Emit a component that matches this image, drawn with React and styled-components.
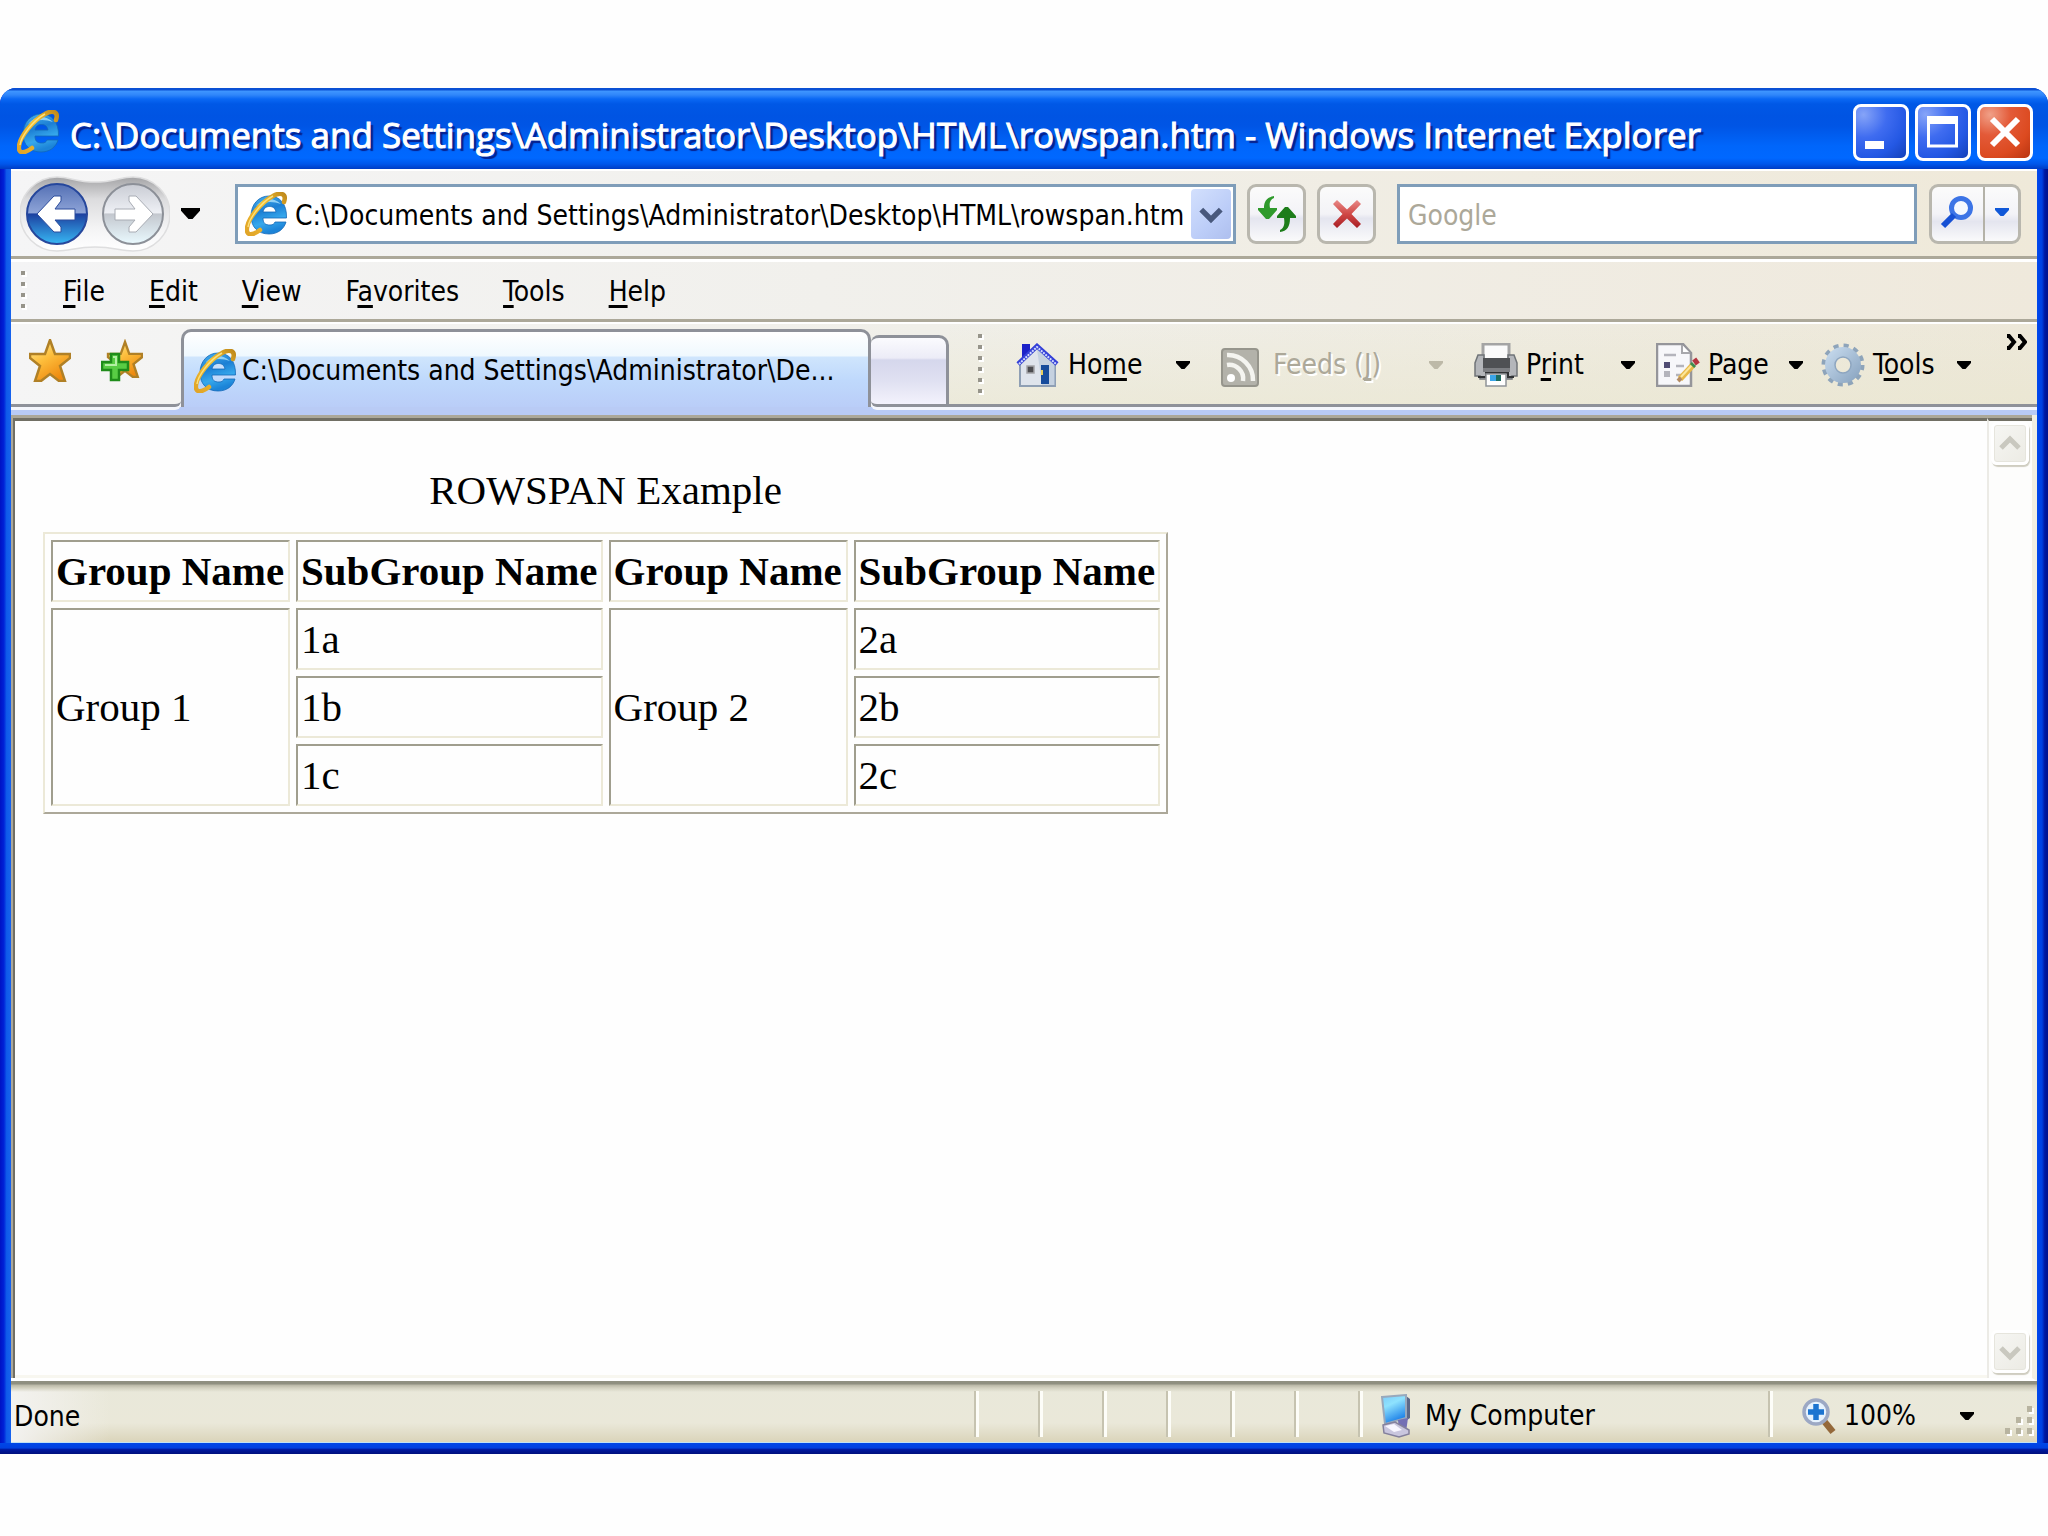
import React from "react";
import styled, { createGlobalStyle, css } from "styled-components";

const UI_FONT = `"DejaVu Sans Condensed", "DejaVu Sans", Tahoma, sans-serif`;
const PATH = "C:\\Documents and Settings\\Administrator\\Desktop\\HTML\\rowspan.htm";

const GlobalStyle = createGlobalStyle`
  *, *::before, *::after { box-sizing: border-box; }
  body { margin: 0; background: #fefefe; }
  button, input { font: inherit; color: inherit; margin: 0; }
  button { border: 0; padding: 0; background: none; cursor: default; }
  svg { display: block; flex: none; }
`;

/* ---------- window frame ---------- */

const Desktop = styled.div`
  min-height: 100vh;
  padding: 88px 0 82px;
  display: flex;
  flex-direction: column;
  font: 28px/36px ${UI_FONT};
  color: #000;
`;

const Window = styled.main`
  flex: 1;
  display: flex;
  flex-direction: column;
  padding: 0 11px 11px;
  border-radius: 16px 16px 0 0;
  background:
    linear-gradient(#0047e8, #0040e0 45%, #0019a0 60%, #00107c) bottom / 100% 11px no-repeat,
    linear-gradient(90deg, #0012c4, #0022d8 35%, #0f5bea 60%, #1663ee) left / 11px 100% no-repeat,
    linear-gradient(90deg, #0048ee, #003fe0 45%, #0018a4 70%, #00108c) right / 11px 100% no-repeat,
    #0048e0;
  overflow: hidden;
`;

const TitleBar = styled.header`
  display: flex;
  align-items: center;
  height: 81px;
  margin: 0 -11px;
  padding: 7px 15px 0 17px;
  background: linear-gradient(
    #0a50d4 0, #0a50d4 2px, #3f96ff 3px, #2f86fa 7px, #0a68f4 11px, #0058e6 16px,
    #0054e3 28px, #0055e5 38px, #0066fb 58px, #0068ff 70px, #0056ea 76px, #003cc4 81px
  );
`;

const Title = styled.h1`
  flex: 1;
  min-width: 0;
  margin: 0 0 0 11px;
  padding-top: 6px;
  font: 400 35px/48px "Open Sans", "Noto Sans", sans-serif;
  color: #fff;
  -webkit-text-stroke: 1px #fff;
  text-shadow: 3px 3px 1px #06208c;
  white-space: nowrap;
  overflow: hidden;
`;

const CaptionButtons = styled.div`
  display: flex;
  gap: 6px;
`;

const CaptionButton = styled.button`
  width: 56px;
  height: 57px;
  display: grid;
  place-items: center;
  border: 3px solid #fff;
  border-radius: 8px;
  background: ${(p) =>
    p.$close
      ? "radial-gradient(circle at 20% 15%, #f0a088, #e35a38 35%, #dc4a20 70%, #b83410)"
      : "radial-gradient(circle at 15% 15%, #86a4f8, #3f6cf0 38%, #2458e4 70%, #1440b8)"};
`;

/* ---------- tool bars ---------- */

const NavBar = styled.div`
  display: flex;
  align-items: center;
  height: 90px;
  padding: 0 16px 0 9px;
  border-top: 2px solid #fff;
  border-bottom: 3px solid #aca899;
  background: linear-gradient(90deg, #f5f5f6, #f1f0ec 40%, #efe9d9);
`;

const NavPair = styled.div`
  position: relative;
  display: flex;
  gap: 14px;
  padding: 7px 6px;
  width: 150px;
`;

const NavPlate = styled.svg`
  position: absolute;
  left: 0;
  top: 0;
`;

const RoundButton = styled.button`
  position: relative;
  width: 62px;
  height: 62px;
`;

const ArrowButton = styled.button`
  display: grid;
  place-items: center;
  width: ${(p) => p.$width}px;
  height: 36px;
  color: ${(p) => (p.disabled ? "#bdb9a8" : "#000")};
`;

const field = css`
  display: flex;
  align-items: center;
  height: 60px;
  border: 3px solid #7f9db9;
  background: #fff;
`;

const AddressBox = styled.div`
  ${field}
  flex: 1;
  min-width: 0;
  margin: 0 11px 0 25px;
  padding: 0 2px 0 7px;
`;

const SearchBox = styled.div`
  ${field}
  flex: 0 1 520px;
  min-width: 0;
  margin: 0 12px 0 10px;
  padding: 0 8px;
`;

const TextInput = styled.input`
  flex: 1;
  min-width: 0;
  height: 44px;
  padding: 4px 0 0;
  border: 0;
  outline: 0;
  background: transparent;
  &::placeholder { color: #aca899; opacity: 1; }
`;

const AddressInput = styled(TextInput)`
  margin: 0 5px 0 8px;
`;

const DropButton = styled.button`
  width: 40px;
  height: 50px;
  display: grid;
  place-items: center;
  border-radius: 4px;
  background: linear-gradient(135deg, #d3e0fd, #bccdf8 60%, #aebfee);
`;

const SquareButton = styled.button`
  width: 59px;
  height: 60px;
  margin-right: 11px;
  display: grid;
  place-items: center;
  border: 3px solid #b9b7ae;
  border-radius: 9px;
  background: linear-gradient(#fbfbfb, #f3f3f7 50%, #e4e5ef 58%, #fafafb);
`;

const SearchButtons = styled.div`
  display: flex;
  width: 92px;
  height: 60px;
  border: 3px solid #b9b7ae;
  border-radius: 9px;
  background: linear-gradient(#fbfbfb, #f3f3f7 50%, #e4e5ef 64%, #fafafb);
`;

const SearchPart = styled.button`
  flex: ${(p) => (p.$narrow ? "0 0 35px" : 1)};
  display: grid;
  place-items: center;
  padding-bottom: 4px;
  color: #1058d8;
  border-left: ${(p) => (p.$narrow ? "2px solid #b4b2a8" : "0")};
`;

const MenuBar = styled.nav`
  display: flex;
  align-items: center;
  height: 63px;
  padding-left: 10px;
  border-top: 3px solid #fff;
  border-bottom: 3px solid #aca899;
  background: linear-gradient(90deg, #f4f4f5, #f1f0ec 40%, #efe9dc);
`;

const MenuButton = styled.button`
  padding: 2px 22px 0;
  height: 40px;
  &:first-of-type { margin-left: 14px; }
`;

const Key = styled.u`
  text-decoration-thickness: 3px;
  text-underline-offset: 4px;
  text-decoration-skip-ink: none;
`;

/* ---------- tabs and commands ---------- */

const TabRow = styled.div`
  display: flex;
  height: 85px;
  border-top: 2px solid #fff;
  background: linear-gradient(90deg, #f5f5f5, #f0efe9 45%, #ede8d9 100%);
`;

const strip = css`
  position: relative;
  border-bottom: 3px solid #8e9199;
  box-shadow: 0 3px 0 #f4f6fc;
`;

const Favorites = styled.div`
  ${strip}
  display: flex;
  gap: 30px;
  width: 170px;
  padding: 15px 0 0 18px;
  border-bottom-right-radius: 6px;
  align-items: flex-start;
`;

const ActiveTab = styled.button`
  display: flex;
  align-items: center;
  width: 690px;
  margin-top: 5px;
  padding: 2px 20px 0 10px;
  gap: 6px;
  border: 3px solid #8e9199;
  border-bottom: 0;
  border-radius: 10px 10px 0 0;
  background: linear-gradient(#fff, #eff8fe 24px, #cfe5fd 25px, #bfd9fc 48px, #b9cbf7 80px);
  white-space: nowrap;
`;

const NewTab = styled.button`
  ${strip}
  width: 78px;
  margin-top: 11px;
  border-top: 3px solid #8e9199;
  border-right: 3px solid #8e9199;
  border-radius: 8px 10px 0 6px;
  background: linear-gradient(#fbfbfe, #ececf7 20px, #d5d7ec 22px, #dfe0f1 42px, #f3f2fc);
`;

const Commands = styled.div`
  ${strip}
  flex: 1;
  display: flex;
  justify-content: flex-end;
  align-items: flex-start;
  padding: 10px 10px 0 0;
  background: linear-gradient(#f0efe900, #e9e6cf90);
`;

const Command = styled.div`
  display: flex;
  align-items: center;
  width: ${(p) => p.$width}px;
  height: 66px;
  padding-bottom: 4px;
`;

const CommandButton = styled.button`
  flex: 1;
  display: flex;
  align-items: center;
  gap: 8px;
  white-space: nowrap;
  color: ${(p) => (p.disabled ? "#aca899" : "#000")};
  text-shadow: ${(p) => (p.disabled ? "2px 2px 0 #fff" : "none")};
`;

const MoreButton = styled.button`
  padding: 0 0 0 17px;
`;

const Band = styled.div`
  height: 8px;
  background: #b9cbf5;
`;

/* ---------- document ---------- */

const Viewport = styled.section`
  flex: 1;
  display: flex;
  min-height: 0;
  border-right: 5px solid #f1efe2;
  background: #fefefe;
  border-bottom: 3px solid #fff;
`;

const Page = styled.div`
  flex: 1;
  padding: 45px 28px;
  border-top: 3px solid #716f64;
  border-left: 2px solid #716f64;
  box-shadow: inset 0 -3px 0 #f8f7f0;
  background: #fefefe;
`;

const Sunken = styled.div`
  flex: 1;
  display: flex;
  border-top: 3px solid #aca899;
  border-left: 2px solid #aca899;
`;

const ScrollBar = styled.div`
  display: flex;
  flex-direction: column;
  justify-content: space-between;
  width: 45px;
  padding: 1px 3px 5px 2px;
  border-top: 3px solid #716f64;
  border-left: 2px solid #ecebe6;
  background: #fdfdfc;
`;

const ScrollButton = styled.button`
  width: 38px;
  height: 43px;
  display: grid;
  place-items: center;
  border: 3px solid #fff;
  border-radius: 6px;
  background: linear-gradient(135deg, #f6f6f3, #ecebe4);
  box-shadow: 1px 2px 1px #cfcdc0, inset 0 0 0 1px #e6e5dd;
`;

const Table = styled.table`
  border: 2px solid;
  border-color: #ece9d8 #aca899 #aca899 #ece9d8;
  border-collapse: separate;
  border-spacing: 6px;
  font: 41px/48px "Liberation Serif", "Times New Roman", serif;

  caption { padding-bottom: 18px; }
  th, td {
    height: 62px;
    padding: 0 3px;
    border: 2px solid;
    border-color: #a09e8e #ece9d8 #ece9d8 #a09e8e;
    text-align: left;
    white-space: nowrap;
  }
`;

const HeadCell = styled.th`
  width: ${(p) => p.$width}px;
`;

/* ---------- status bar ---------- */

const StatusBar = styled.footer`
  display: flex;
  height: 62px;
  padding: 10px 0 5px;
  border-bottom: 1px solid #bfe0f4;
  background:
    linear-gradient(#8f8f80 0, #8f8f80 3px, #b9b7a6 4px, #d3d1c0 7px, #e8e6d700 11px),
    linear-gradient(90deg, #f3f2f0 0, #f3f2f000 100px),
    linear-gradient(#e9e8da 0, #eae8d9 42px, #d9d3b8 62px);
`;

const StatusText = styled.p`
  flex: 1;
  margin: 0;
  padding: 8px 0 0 3px;
`;

const StatusCell = styled.div`
  display: flex;
  width: ${(p) => p.$width}px;
  border-left: 2px solid #c6c3b0;
  box-shadow: inset 3px 0 0 #fdfdf8;
`;

const Zone = styled.span`
  display: flex;
  align-items: center;
  gap: 14px;
  padding: 3px 0 0 21px;
`;

const ZoomGroup = styled.div`
  display: flex;
  align-items: center;
  flex: 1;
  padding: 3px 0 0 32px;
`;

const ZoomButton = styled.button`
  display: flex;
  align-items: center;
  gap: 8px;
`;

const ZoomArrow = styled(ArrowButton)`
  margin-left: 16px;
`;

const Corner = styled.span`
  margin-left: auto;
  align-self: flex-end;
  padding-right: 3px;
`;

/* ---------- drawings ---------- */

const IeIcon = () => (
  <svg width="42" height="44" viewBox="0 0 42 44" aria-hidden="true">
    <defs>
      <linearGradient id="ieBlue" x1="0" y1="0" x2="0.300" y2="1">
        <stop offset="0" stopColor="#4ab4f0" />
        <stop offset="0.450" stopColor="#1c7fd4" />
        <stop offset="0.750" stopColor="#36a8ec" />
        <stop offset="1" stopColor="#1c84d8" />
      </linearGradient>
      <linearGradient id="ieGold" x1="1" y1="0" x2="0" y2="1">
        <stop offset="0" stopColor="#c08a1c" />
        <stop offset="0.400" stopColor="#f4c030" />
        <stop offset="1" stopColor="#e0a428" />
      </linearGradient>
    </defs>
    <path
      fillRule="evenodd"
      fill="url(#ieBlue)"
      stroke="#1468b8"
      strokeWidth="0.800"
      d="M24 4 C35 4 42 12 41.500 26 H18 C18 31 20 33 25 33 C28 33 29 32 30 30 H41 C39 37 33 42 24 42 C13 42 6 35 6 24 C6 12 14 4 24 4 Z M18 20 H31 C30 16 28 14.500 24.500 14.500 C21 14.500 19 16 18 20 Z"
    />
    <path d="M11 14 Q23 1 36 12 Q23 7 11 14 Z" fill="#a8e0fb" opacity="0.800" />
    <path
      d="M39 10 C42 1 35 0 28 4 C15 11 3 27 2 36 C1 44 7 44 15 38"
      fill="none"
      stroke="url(#ieGold)"
      strokeWidth="4.500"
      strokeLinecap="round"
    />
    <path d="M28 4 C15 11 4 27 3 35" fill="none" stroke="#fbe07c" strokeWidth="1.500" />
  </svg>
);

const Triangle = ({ size = 14 }) => (
  <svg width={size} height={Math.round(size / 1.7)} viewBox="0 0 14 8" aria-hidden="true">
    <path d="M0 0 H14 V2 L8.500 8 H5.500 L0 2 Z" fill="currentColor" />
  </svg>
);

const Chevron = ({ up, color, size = 24 }) => (
  <svg width={size} height={size} viewBox="0 0 24 24" aria-hidden="true">
    <path
      d={up ? "M3 16 L12 7 L21 16" : "M3 8 L12 17 L21 8"}
      fill="none"
      stroke={color}
      strokeWidth="5"
    />
  </svg>
);

const Grip = ({ dots }) => (
  <svg width="6" height={dots * 11 - 4} aria-hidden="true">
    {Array.from({ length: dots }, (_, i) => (
      <g key={i}>
        <rect x="1" y={i * 11 + 1} width="5" height="5" fill="#fff" />
        <rect x="0" y={i * 11} width="4" height="4" fill="#96948a" />
      </g>
    ))}
  </svg>
);

const Plate = () => (
  <NavPlate width="150" height="76" viewBox="0 0 150 76" aria-hidden="true">
    <defs>
      <linearGradient id="plate" x1="0" y1="0" x2="0" y2="1">
        <stop offset="0" stopColor="#a4a4a6" />
        <stop offset="0.300" stopColor="#dcdcde" />
        <stop offset="0.700" stopColor="#f4f4f5" />
        <stop offset="1" stopColor="#fff" />
      </linearGradient>
    </defs>
    <path
      d="M37 1 C50 1 56 6 75 6 C94 6 100 1 113 1 A37 37 0 0 1 113 75 C100 75 94 71 75 71 C56 71 50 75 37 75 A37 37 0 0 1 37 1 Z"
      fill="url(#plate)"
      stroke="#dededf"
      strokeWidth="1.500"
    />
  </NavPlate>
);

const NavDisc = ({ forward }) => {
  const id = forward ? "discF" : "discB";
  const stops = forward
    ? ["#c9ccd4", "#eef0f5", "#c3c7ce", "#eafaff"]
    : ["#5470b4", "#8ea4d8", "#1c40a0", "#38b8f4"];
  return (
    <svg width="62" height="62" viewBox="0 0 62 62" aria-hidden="true">
      <defs>
        <linearGradient id={id} x1="0" y1="0" x2="0" y2="1">
          <stop offset="0" stopColor={stops[0]} />
          <stop offset="0.480" stopColor={stops[1]} />
          <stop offset="0.500" stopColor={stops[2]} />
          <stop offset="1" stopColor={stops[3]} />
        </linearGradient>
      </defs>
      <circle cx="31" cy="31" r="30" fill={`url(#${id})`} stroke={forward ? "#8c9098" : "#26479c"} strokeWidth="2" />
      <path
        d={
          forward
            ? "M51 31 L34 49 H27 V44 L33 37 H13 V26 H33 L27 18 V13 H34 Z"
            : "M11 31 L28 13 H35 V18 L29 26 H49 V37 H29 L35 44 V49 H28 Z"
        }
        fill="#fff"
        stroke={forward ? "#a8acb4" : "#2c4c9c"}
        strokeWidth="1"
      />
    </svg>
  );
};

const Refresh = () => (
  <svg width="38" height="36" viewBox="0 0 38 36" aria-hidden="true">
    <path d="M16 0 C9 1 6 5 6 12 H0 V14 L8 23 H11 L19 14 V12 H12 C11 7 12 4 16 2 Z" fill="#2f9a2c" />
    <path d="M22 36 C29 35 32 31 32 22 H38 V20 L30 11 H27 L19 20 V22 H26 C27 28 26 32 22 34 Z" fill="#1d7d1a" />
  </svg>
);

const Stop = () => (
  <svg width="28" height="28" viewBox="0 0 28 28" aria-hidden="true">
    <defs>
      <linearGradient id="stopRed" x1="0" y1="0" x2="0" y2="1">
        <stop offset="0" stopColor="#e88a88" />
        <stop offset="0.500" stopColor="#d04846" />
        <stop offset="1" stopColor="#a81e24" />
      </linearGradient>
    </defs>
    <path d="M4 0 L14 9.500 L24 0 L28 4 L18.500 14 L28 24 L24 28 L14 18.500 L4 28 L0 24 L9.500 14 L0 4 Z" fill="url(#stopRed)" />
  </svg>
);

const SearchGlyph = () => (
  <svg width="36" height="34" viewBox="0 0 36 34" aria-hidden="true">
    <circle cx="21" cy="13" r="9.500" fill="#f4f8ff" stroke="#3c74e6" strokeWidth="5" />
    <path d="M14 20 L3 31" stroke="#1650d4" strokeWidth="6" />
  </svg>
);

const STAR = "M20 0 L25 14 H40 V18 L30 26 L35 41 H29 L20 34 L11 41 H5 L10 26 L0 18 V14 H15 Z";

const Star = () => (
  <svg width="42" height="43" viewBox="-1 -1 42 43" aria-hidden="true">
    <defs>
      <linearGradient id="gold" x1="0" y1="0" x2="0.600" y2="1">
        <stop offset="0" stopColor="#fff0a0" />
        <stop offset="0.500" stopColor="#fdbe3c" />
        <stop offset="1" stopColor="#ee8a10" />
      </linearGradient>
    </defs>
    <path d={STAR} fill="url(#gold)" stroke="#b08026" strokeWidth="2.500" />
  </svg>
);

const AddStar = () => (
  <svg width="42" height="43" viewBox="0 0 42 43" aria-hidden="true">
    <g transform="translate(7 3) scale(0.850)">
      <path d={STAR} fill="url(#gold)" stroke="#b08026" strokeWidth="2.800" />
    </g>
    <path d="M10 15 H18 V23 H27 V31 H18 V41 H10 V31 H1 V23 H10 Z" fill="#58cc44" stroke="#1f8c1a" strokeWidth="2.500" />
    <path d="M12 18 H15 V26 H4" fill="none" stroke="#b4f0a4" strokeWidth="2" />
  </svg>
);

const HomeIcon = () => (
  <svg width="44" height="44" viewBox="0 0 44 44" aria-hidden="true">
    <rect x="6" y="1" width="8" height="15" fill="#1c22c8" />
    <path d="M4 21 L21 5 L39 21 V43 H4 Z" fill="#dfe4ec" stroke="#8f9fb4" strokeWidth="2" />
    <path d="M21 6 L39 22 V42 H26 Z" fill="#b4c4d8" opacity="0.600" />
    <path d="M2 21 L21 3 L41 21" fill="none" stroke="#3440d8" strokeWidth="4.500" />
    <path d="M3 21 L21 4 L40 21" fill="none" stroke="#d4dcff" strokeWidth="2" strokeDasharray="2 1" />
    <rect x="11" y="23" width="7" height="7" fill="#4c4c50" stroke="#a4a4a8" strokeWidth="1.500" />
    <rect x="25" y="22" width="8" height="19" fill="#174c9c" />
    <rect x="25" y="27" width="2" height="5" fill="#e8d060" />
  </svg>
);

const FeedIcon = () => (
  <svg width="44" height="44" viewBox="0 0 44 44" aria-hidden="true">
    <rect x="1" y="6" width="36" height="37" rx="3" fill="#b3b2aa" stroke="#96958c" strokeWidth="2" />
    <circle cx="10" cy="35" r="4" fill="#fff" />
    <path d="M6 22 A14 14 0 0 1 22 38 M6 12 A25 25 0 0 1 32 38" fill="none" stroke="#f4f4f0" strokeWidth="4.500" />
  </svg>
);

const PrintIcon = () => (
  <svg width="44" height="44" viewBox="0 0 44 44" aria-hidden="true">
    <rect x="9" y="1" width="26" height="18" fill="#fbfbfb" stroke="#a4a4a4" strokeWidth="3" />
    <path d="M4 12 H10 V17 H34 V12 H40 L43 20 V33 H38 V36 H6 V33 H1 V20 Z" fill="#b4b6ba" stroke="#707478" strokeWidth="1.500" />
    <rect x="9" y="15" width="27" height="10" fill="#4f5154" />
    <rect x="9" y="25" width="27" height="4" fill="#7c7e82" />
    <path d="M4 34 H12 V30 H34 V34 H40" fill="none" stroke="#303234" strokeWidth="2" />
    <rect x="12" y="31" width="20" height="12" fill="#fff" stroke="#909498" strokeWidth="1.500" />
    <rect x="16" y="32" width="6" height="6" fill="#3aa4e8" />
    <rect x="22" y="32" width="5" height="6" fill="#1c6c60" />
  </svg>
);

const PageIcon = () => (
  <svg width="44" height="44" viewBox="0 0 44 44" aria-hidden="true">
    <path d="M1 1 H27 L35 10 V43 H1 Z" fill="#f7f7fa" stroke="#95959a" strokeWidth="2.500" />
    <path d="M26 2 V10 H34" fill="#fff" stroke="#a8a8ac" strokeWidth="2" />
    <path d="M8 12 H20 M20 23 H28 M20 32 H26" stroke="#b4b4bc" strokeWidth="2.500" />
    <rect x="8" y="19" width="6" height="6" fill="#504c74" />
    <rect x="8" y="28" width="6" height="6" fill="#b4b4bc" />
    <path d="M24 36 L37 22" stroke="#e8b848" strokeWidth="6" />
    <path d="M25 34 L36 22" stroke="#fbe69c" strokeWidth="2" />
    <path d="M36 23 L38 21" stroke="#3c8c50" strokeWidth="6" />
    <path d="M38 20 L42 17" stroke="#b43440" strokeWidth="6" />
    <path d="M22 38 L25 35" stroke="#b48c64" strokeWidth="4" />
  </svg>
);

const GearIcon = () => (
  <svg width="44" height="44" viewBox="0 0 44 44" aria-hidden="true">
    <defs>
      <linearGradient id="gear" x1="0" y1="0" x2="1" y2="1">
        <stop offset="0" stopColor="#c2d6ea" />
        <stop offset="1" stopColor="#8fa9c4" />
      </linearGradient>
    </defs>
    <circle cx="22" cy="22" r="19" fill="none" stroke="#8ea4ba" strokeWidth="5" strokeDasharray="5 4.948" />
    <circle cx="22" cy="22" r="13" fill="none" stroke="url(#gear)" strokeWidth="10" />
    <circle cx="22" cy="22" r="8" fill="none" stroke="#8ea6c0" strokeWidth="1.500" />
  </svg>
);

const ComputerIcon = () => (
  <svg width="30" height="44" viewBox="0 0 30 44" aria-hidden="true">
    <defs>
      <linearGradient id="screen" x1="0" y1="0" x2="0.400" y2="1">
        <stop offset="0" stopColor="#7ccaf8" />
        <stop offset="0.400" stopColor="#8ee2fe" />
        <stop offset="1" stopColor="#1c80e8" />
      </linearGradient>
    </defs>
    <path d="M25 2 L29 5 V24 L23 28 Z" fill="#5c6888" />
    <path d="M1 3 L25 1 V24 L4 30 Z" fill="url(#screen)" stroke="#98a8bc" strokeWidth="2" />
    <path d="M17 26 L27 24 L25 38 H18 Z" fill="#7470b4" />
    <path d="M2 31 L14 28 L28 36 V40 L18 43 L3 39 Z" fill="#c9c6de" stroke="#84809c" strokeWidth="1.500" />
    <path d="M4 32 L13 30 L21 36 L13 38 Z" fill="#f8f6ff" />
  </svg>
);

const ZoomIcon = () => (
  <svg width="34" height="38" viewBox="0 0 34 38" aria-hidden="true">
    <path d="M22 24 L31 35" stroke="#94683a" strokeWidth="6.500" />
    <circle cx="14" cy="15" r="12" fill="#e6f2fe" stroke="#9ca8c4" strokeWidth="3.500" />
    <path d="M14 7 V23 M6 15 H22" stroke="#1c74d0" strokeWidth="5.500" />
  </svg>
);

const ResizeGrip = () => (
  <svg width="29" height="31" viewBox="0 0 29 31" aria-hidden="true">
    {[[22, 0], [11, 11], [22, 11], [0, 22], [11, 22], [22, 22]].map(([x, y]) => (
      <g key={`${x}-${y}`}>
        <rect x={x + 2} y={y + 2} width="5" height="6" fill="#fff" />
        <rect x={x} y={y} width="5" height="6" fill="#b8b4a0" />
      </g>
    ))}
  </svg>
);

/* ---------- content ---------- */

const MENUS = [
  ["", "F", "ile"],
  ["", "E", "dit"],
  ["", "V", "iew"],
  ["F", "a", "vorites"],
  ["", "T", "ools"],
  ["", "H", "elp"],
];

const COMMANDS = [
  { id: "Home", text: ["Ho", "m", "e"], Icon: HomeIcon, width: 205, arrow: 76 },
  { id: "Feeds", text: ["Feeds (", "J", ")"], Icon: FeedIcon, width: 253, arrow: 76, disabled: true },
  { id: "Print", text: ["P", "r", "int"], Icon: PrintIcon, width: 182, arrow: 56 },
  { id: "Page", text: ["", "P", "age"], Icon: PageIcon, width: 165, arrow: 50 },
  { id: "Tools", text: ["T", "o", "ols"], Icon: GearIcon, width: 168, arrow: 50 },
];

const Label = ({ text: [before, key, after] }) => (
  <span>
    {before}
    <Key>{key}</Key>
    {after}
  </span>
);

export default function App() {
  return (
    <Desktop>
      <GlobalStyle />
      <Window>
        <TitleBar>
          <IeIcon />
          <Title>{PATH} - Windows Internet Explorer</Title>
          <CaptionButtons>
            <CaptionButton aria-label="Minimize">
              <svg width="40" height="40" aria-hidden="true">
                <rect x="4" y="29" width="19" height="8" fill="#fff" />
              </svg>
            </CaptionButton>
            <CaptionButton aria-label="Maximize">
              <svg width="32" height="34" viewBox="0 0 32 34" aria-hidden="true">
                <path d="M1.500 3 V31 H29.500 V3" fill="none" stroke="#fff" strokeWidth="3" />
                <rect width="31" height="8" y="1" fill="#fff" />
              </svg>
            </CaptionButton>
            <CaptionButton $close aria-label="Close">
              <svg width="32" height="32" viewBox="0 0 32 32" aria-hidden="true">
                <path d="M3 3 L29 29 M29 3 L3 29" stroke="#fff" strokeWidth="6" />
              </svg>
            </CaptionButton>
          </CaptionButtons>
        </TitleBar>

        <NavBar>
          <NavPair>
            <Plate />
            <RoundButton aria-label="Back"><NavDisc /></RoundButton>
            <RoundButton aria-label="Forward"><NavDisc forward /></RoundButton>
          </NavPair>
          <ArrowButton $width={40} aria-label="Recent pages"><Triangle size={19} /></ArrowButton>
          <AddressBox>
            <IeIcon />
            <AddressInput aria-label="Address" defaultValue={PATH} />
            <DropButton aria-label="Show addresses"><Chevron color="#48587c" size={26} /></DropButton>
          </AddressBox>
          <SquareButton aria-label="Refresh"><Refresh /></SquareButton>
          <SquareButton aria-label="Stop"><Stop /></SquareButton>
          <SearchBox>
            <TextInput aria-label="Search" placeholder="Google" />
          </SearchBox>
          <SearchButtons>
            <SearchPart aria-label="Search"><SearchGlyph /></SearchPart>
            <SearchPart $narrow aria-label="Search options"><Triangle /></SearchPart>
          </SearchButtons>
        </NavBar>

        <MenuBar>
          <Grip dots={4} />
          {MENUS.map((m) => (
            <MenuButton key={m.join("")}><Label text={m} /></MenuButton>
          ))}
        </MenuBar>

        <TabRow>
          <Favorites>
            <button aria-label="Favorites Center"><Star /></button>
            <button aria-label="Add to Favorites"><AddStar /></button>
          </Favorites>
          <ActiveTab>
            <IeIcon />
            <span>C:\Documents and Settings\Administrator\De...</span>
          </ActiveTab>
          <NewTab aria-label="New Tab" />
          <Commands>
            <Command $width={38}><Grip dots={6} /></Command>
            {COMMANDS.map(({ id, text, Icon, width, arrow, disabled }) => (
              <Command key={id} $width={width}>
                <CommandButton disabled={disabled}>
                  <Icon />
                  <Label text={text} />
                </CommandButton>
                <ArrowButton $width={arrow} disabled={disabled} aria-label={`${id} options`}>
                  <Triangle />
                </ArrowButton>
              </Command>
            ))}
            <MoreButton aria-label="More commands">
              <svg width="21" height="16" viewBox="0 0 21 16" aria-hidden="true">
                <path d="M1 2 H3 L8 8 L3 14 H1 M12 2 H14 L19 8 L14 14 H12" fill="none" stroke="#000" strokeWidth="4" />
              </svg>
            </MoreButton>
          </Commands>
        </TabRow>
        <Band />

        <Viewport>
          <Sunken>
            <Page>
              <Table>
                <caption>ROWSPAN Example</caption>
                <thead>
                  <tr>
                    <HeadCell $width={239}>Group Name</HeadCell>
                    <HeadCell $width={306}>SubGroup Name</HeadCell>
                    <HeadCell $width={239}>Group Name</HeadCell>
                    <HeadCell $width={306}>SubGroup Name</HeadCell>
                  </tr>
                </thead>
                <tbody>
                  <tr>
                    <td rowSpan={3}>Group 1</td>
                    <td>1a</td>
                    <td rowSpan={3}>Group 2</td>
                    <td>2a</td>
                  </tr>
                  <tr>
                    <td>1b</td>
                    <td>2b</td>
                  </tr>
                  <tr>
                    <td>1c</td>
                    <td>2c</td>
                  </tr>
                </tbody>
              </Table>
            </Page>
            <ScrollBar>
              <ScrollButton aria-label="Scroll up"><Chevron up color="#c9c8bf" /></ScrollButton>
              <ScrollButton aria-label="Scroll down"><Chevron color="#c9c8bf" /></ScrollButton>
            </ScrollBar>
          </Sunken>
        </Viewport>

        <StatusBar>
          <StatusText>Done</StatusText>
          {[1, 2, 3, 4, 5, 6].map((n) => (
            <StatusCell key={n} $width={64} />
          ))}
          <StatusCell $width={410}>
            <Zone><ComputerIcon />My Computer</Zone>
          </StatusCell>
          <StatusCell $width={269}>
            <ZoomGroup>
              <ZoomButton><ZoomIcon />100%</ZoomButton>
              <ZoomArrow $width={70} aria-label="Zoom level"><Triangle /></ZoomArrow>
              <Corner><ResizeGrip /></Corner>
            </ZoomGroup>
          </StatusCell>
        </StatusBar>
      </Window>
    </Desktop>
  );
}
